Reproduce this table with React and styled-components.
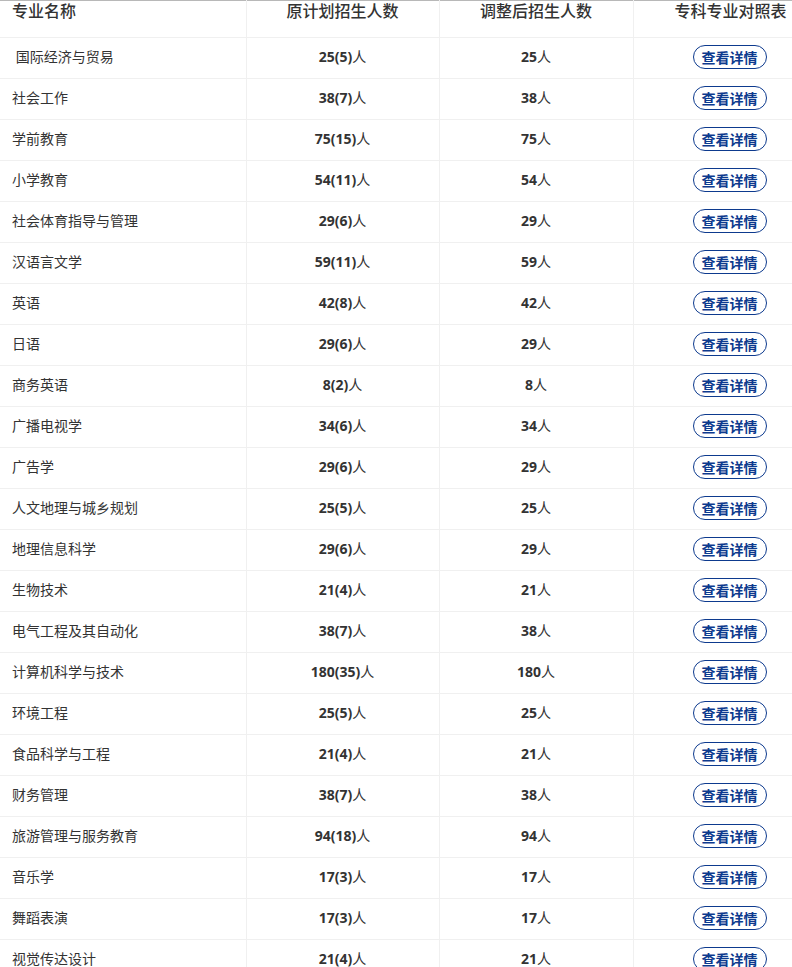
import React from 'react';
import styled, { createGlobalStyle } from 'styled-components';

const GlobalStyle = createGlobalStyle`
  html, body {
    margin: 0;
    padding: 0;
    background: #fff;
    overflow: hidden;
  }
  body {
    font-family: "Noto Sans", "Noto Sans CJK SC", sans-serif;
    color: #333;
  }
`;

const majors = [
  [' 国际经济与贸易', 25, 5, 25],
  ['社会工作', 38, 7, 38],
  ['学前教育', 75, 15, 75],
  ['小学教育', 54, 11, 54],
  ['社会体育指导与管理', 29, 6, 29],
  ['汉语言文学', 59, 11, 59],
  ['英语', 42, 8, 42],
  ['日语', 29, 6, 29],
  ['商务英语', 8, 2, 8],
  ['广播电视学', 34, 6, 34],
  ['广告学', 29, 6, 29],
  ['人文地理与城乡规划', 25, 5, 25],
  ['地理信息科学', 29, 6, 29],
  ['生物技术', 21, 4, 21],
  ['电气工程及其自动化', 38, 7, 38],
  ['计算机科学与技术', 180, 35, 180],
  ['环境工程', 25, 5, 25],
  ['食品科学与工程', 21, 4, 21],
  ['财务管理', 38, 7, 38],
  ['旅游管理与服务教育', 94, 18, 94],
  ['音乐学', 17, 3, 17],
  ['舞蹈表演', 17, 3, 17],
  ['视觉传达设计', 21, 4, 21],
];

export default function App() {
  return (
    <>
      <GlobalStyle />
      <Table>
        <colgroup>
          <col style={{ width: 246 }} />
          <col style={{ width: 193 }} />
          <col style={{ width: 194 }} />
          <col style={{ width: 195 }} />
        </colgroup>
        <thead>
          <tr>
            <HeadCell $left>专业名称</HeadCell>
            <HeadCell>原计划招生人数</HeadCell>
            <HeadCell>调整后招生人数</HeadCell>
            <HeadCell>专科专业对照表</HeadCell>
          </tr>
        </thead>
        <tbody>
          {majors.map(([name, plan, part, adjusted]) => (
            <tr key={name}>
              <Cell $left>{name}</Cell>
              <Cell>
                <Num>{plan}({part})</Num>人
              </Cell>
              <Cell>
                <Num>{adjusted}</Num>人
              </Cell>
              <Cell>
                <DetailButton type="button">查看详情</DetailButton>
              </Cell>
            </tr>
          ))}
        </tbody>
      </Table>
    </>
  );
}

const Table = styled.table`
  width: 828px;
  table-layout: fixed;
  border-collapse: collapse;
  border-top: 1px solid #b8b8b8;
`;

const HeadCell = styled.th`
  height: 36px;
  padding: 0 ${(p) => (p.$left ? '12px' : '0')} 0;
  vertical-align: top;
  text-align: ${(p) => (p.$left ? 'left' : 'center')};
  font-size: 16px;
  font-weight: 500;
  line-height: 20px;
  color: #333;
  border-right: 1px solid #f0f0f0;
  border-bottom: 1px solid #f0f0f0;
  white-space: nowrap;
`;

const Cell = styled.td`
  box-sizing: border-box;
  height: 41px;
  padding: 0 ${(p) => (p.$left ? '12px' : '0')} 2px;
  text-align: ${(p) => (p.$left ? 'left' : 'center')};
  vertical-align: middle;
  font-size: 14px;
  line-height: 20px;
  color: #333;
  white-space: pre;
  border-right: 1px solid #f0f0f0;
  border-bottom: 1px solid #f0f0f0;
`;

const Num = styled.b`
  font-size: 14px;
  font-weight: 700;
  color: #333;
`;

const DetailButton = styled.button`
  display: inline-flex;
  align-items: center;
  justify-content: center;
  width: 74px;
  height: 24px;
  margin: 0 0 0 -2px;
  padding: 0;
  border: 1px solid #0d3a8e;
  border-radius: 12px;
  background: #fff;
  color: #0d3a8e;
  font-family: "Noto Sans CJK SC", sans-serif;
  font-size: 14px;
  font-weight: 700;
  cursor: pointer;
`;
